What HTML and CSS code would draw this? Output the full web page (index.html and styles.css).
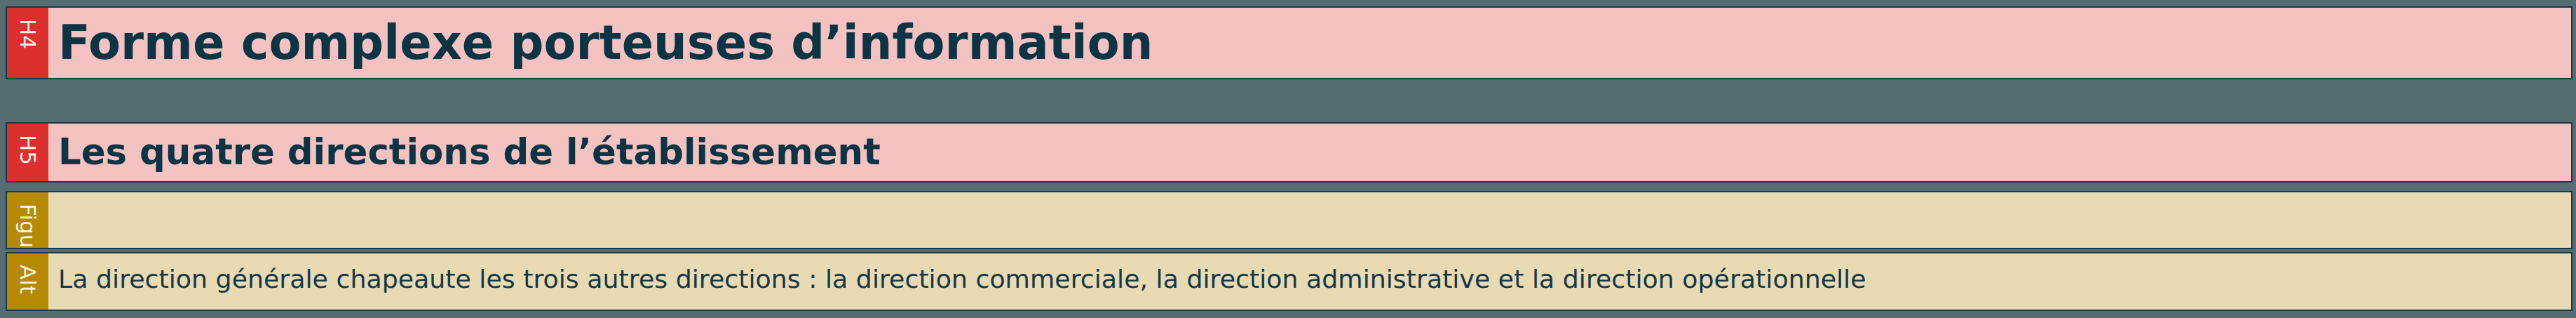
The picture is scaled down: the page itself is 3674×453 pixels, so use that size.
FILE: index.html
```html
<!DOCTYPE html>
<html lang="fr">
<head>
<meta charset="utf-8">
<title>Structure</title>
<link rel="stylesheet" href="styles.css">
</head>
<body>
<div class="stack">
  <div class="block heading h4">
    <div class="tag"><span>H4</span></div>
    <div class="content"><h4 class="title-4">Forme complexe porteuses d’information</h4></div>
  </div>
  <div class="block heading h5">
    <div class="tag"><span>H5</span></div>
    <div class="content"><h5 class="title-5">Les quatre directions de l’établissement</h5></div>
  </div>
  <div class="block media figure">
    <div class="tag"><span>Figure</span></div>
    <div class="content"></div>
  </div>
  <div class="block media alt">
    <div class="tag"><span>Alt</span></div>
    <div class="content"><p class="alt-text">La direction générale chapeaute les trois autres directions : la direction commerciale, la direction administrative et la direction opérationnelle</p></div>
  </div>
</div>
</body>
</html>
```

FILE: styles.css
```css
html, body {
  background: #566d74;
}
body {
  margin: 9px 5px 0 8px;
  font-family: "DejaVu Sans", Verdana, sans-serif;
}
.stack {
  display: flex;
  flex-direction: column;
}
.block {
  display: flex;
  border: 2px solid #173a47;
  box-sizing: border-box;
  overflow: hidden;
}
.heading { background: #f5c2c2; }
.media { background: #e8dbb3; }
.h4 { height: 104px; }
.h5 { height: 86px; margin-top: 61px; }
.figure { height: 83px; margin-top: 12px; }
.alt { height: 84px; margin-top: 4px; }

.tag {
  width: 59px;
  flex: 0 0 59px;
  overflow: hidden;
  display: flex;
  justify-content: center;
  color: #fbf4e6;
}
.heading .tag { background: #dc2f2f; }
.media .tag { background: #b58900; }
.tag span {
  writing-mode: vertical-rl;
  font-family: "DejaVu Sans", Verdana, sans-serif;
  font-size: 31px;
  line-height: 59px;
  white-space: nowrap;
  padding-top: 16px;
}
.content {
  flex: 1;
  display: flex;
  align-items: center;
  padding-left: 14px;
  color: #0b3444;
}
.title-4 {
  margin: 0;
  font-size: 67px;
  font-weight: bold;
  line-height: 1;
}
.title-5 {
  margin: 0;
  font-size: 51.4px;
  font-weight: bold;
  line-height: 1;
}
.alt-text {
  margin: 0 0 8px;
  font-family: "DejaVu Sans", Verdana, sans-serif;
  font-size: 36.3px;
  color: #153848;
  white-space: nowrap;
}
```
